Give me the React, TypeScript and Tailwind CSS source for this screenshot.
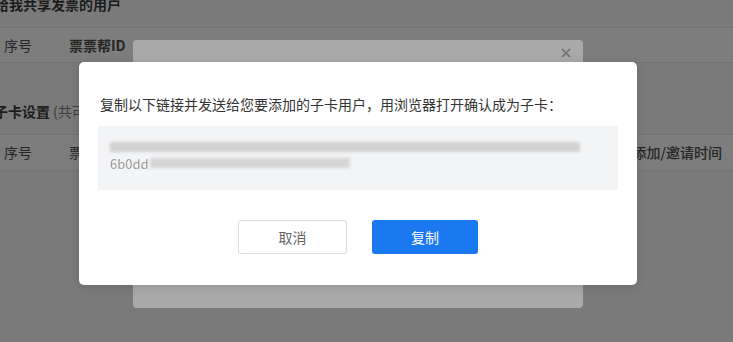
const font = "font-['Noto_Sans_CJK_SC','Noto_Sans',sans-serif]";

const PageBehind = () => {
  return (
    <div className="text-[#262626]">
      <div className="-ml-[5px] -mt-[6px] h-[33px] text-[14px] font-bold leading-[20px] text-[#1c1c1c]">
        给我共享发票的用户
      </div>
      <div className="flex h-[36px] items-center border-y border-[#737373] bg-[#7d7d7d] text-[14px]">
        <span className="ml-[4px] w-[65px]">序号</span>
        <span className="font-bold">票票帮ID</span>
      </div>
      <div className="mt-[36px] flex h-[24px] items-center -ml-[6px]">
        <span className="text-[14px] font-bold text-[#1c1c1c]">子卡设置</span>
        <span className="ml-[3px] text-[14px] text-[#3c3c3c]">(共可添加</span>
      </div>
      <div className="mt-[11px] flex h-[37px] items-center border-y border-[#737373] bg-[#7d7d7d] text-[14px]">
        <span className="ml-[4px] w-[65px]">序号</span>
        <span>票票帮ID</span>
        <span className="ml-auto mr-[11px] font-medium">添加/邀请时间</span>
      </div>
    </div>
  );
};

export default function App() {
  return (
    <div className={`relative h-[342px] w-[733px] overflow-hidden bg-[#7a7a7a] ${font}`}>
      <PageBehind />

      {/* first dialog, dimmed behind */}
      <div className="absolute left-[133px] top-[40px] h-[268px] w-[450px] rounded-[4px] bg-[#a9a9a9]">
        <svg className="absolute right-[12px] top-[8px]" width="10" height="10" viewBox="0 0 10 10">
          <path d="M1 1L9 9M9 1L1 9" stroke="#6e6e6e" strokeWidth="1.6" />
        </svg>
      </div>

      {/* link dialog */}
      <div className="absolute left-[79px] top-[62px] flex h-[223px] w-[558px] flex-col rounded-[5px] bg-white px-[19px] pt-[32px] shadow-[0_2px_12px_rgba(0,0,0,0.12)]">
        <p className="ml-[2px] text-[14px] leading-[20px] text-[#333]">
          复制以下链接并发送给您要添加的子卡用户，用浏览器打开确认成为子卡：
        </p>
        <div className="mt-[12px] flex h-[64px] flex-col justify-center bg-[#f3f4f6] pl-[12px] text-[13px] leading-[23px] text-[#9b9b9b]">
          <div className="flex">
            <span className="h-[10px] w-[470px] self-center bg-[#d2d2d2] blur-[1.5px]"></span>
          </div>
          <div className="flex items-center">
            <span className="blur-[0.6px]">6b0dd</span>
            <span className="ml-[1px] h-[10px] w-[200px] bg-[#d6d6d6] blur-[1.5px]"></span>
          </div>
        </div>
        <div className="mt-[30px] flex justify-center gap-[25px] text-[14px]">
          <button className="h-[34px] w-[109px] rounded-[3px] border border-[#dcdcdc] bg-white text-[#666]">
            取消
          </button>
          <button className="h-[34px] w-[106px] rounded-[3px] bg-[#1a78f0] text-white">
            复制
          </button>
        </div>
      </div>
    </div>
  );
}
